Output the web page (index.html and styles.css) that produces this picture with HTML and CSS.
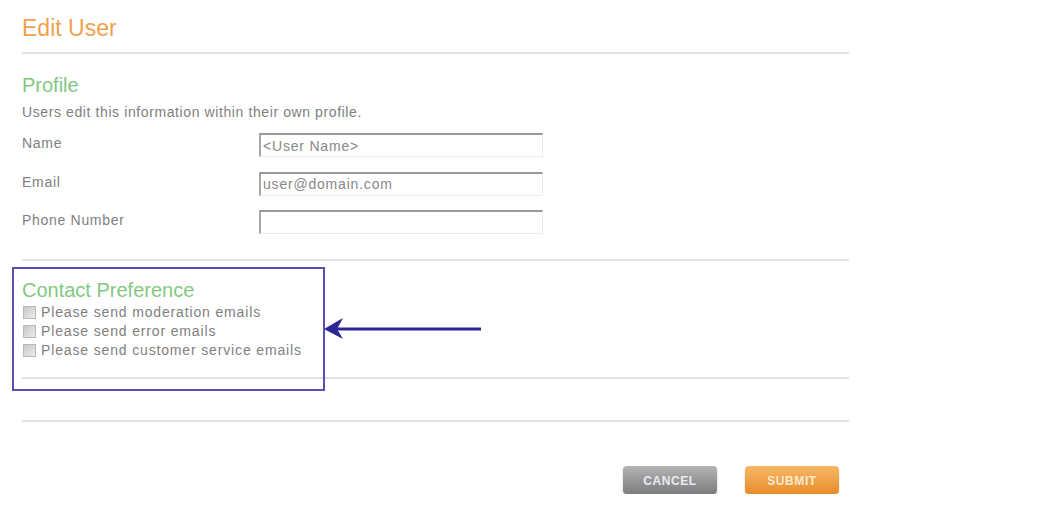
FILE: index.html
```html
<!DOCTYPE html>
<html lang="en">
<head>
  <meta charset="UTF-8" />
  <title>Edit User</title>
  <link rel="stylesheet" href="styles.css">
</head>
<body>
  <div class="page">
    <h1 class="title">Edit User</h1>
    <hr />

    <section class="profile">
      <h2>Profile</h2>
      <p class="hint">Users edit this information within their own profile.</p>
      <div class="fields">
        <div class="field">
          <label for="name">Name</label>
          <input type="text" id="name" value="&lt;User Name&gt;" />
        </div>
        <div class="field">
          <label for="email">Email</label>
          <input type="text" id="email" value="user@domain.com" />
        </div>
        <div class="field">
          <label for="phone">Phone Number</label>
          <input type="text" id="phone" value="" />
        </div>
      </div>
    </section>
    <hr class="after-profile" />

    <section class="contact">
      <h2>Contact Preference</h2>
      <label class="check"><input type="checkbox" /> Please send moderation emails</label>
      <label class="check"><input type="checkbox" /> Please send error emails</label>
      <label class="check"><input type="checkbox" /> Please send customer service emails</label>
    </section>
    <hr class="after-contact" />
    <hr class="last" />

    <div class="actions">
      <button class="btn cancel">Cancel</button>
      <button class="btn submit">Submit</button>
    </div>

    <!-- annotation drawn over the form -->
    <div class="callout"></div>
    <svg class="arrow" width="170" height="30" viewBox="0 0 170 30">
      <line x1="14" y1="15" x2="158" y2="15" stroke="#2b2595" stroke-width="3" />
      <path d="M1 15 L20 4 L14 15 L20 25 Z" fill="#2b2595" />
    </svg>
  </div>
</body>
</html>
```

FILE: styles.css
```css
body {
  margin: 0;
  background: #fff;
  font-family: "Liberation Sans", Arial, sans-serif;
  color: #808080;
}

.page {
  position: relative;
  width: 827px;
  margin-left: 22px;
  padding-top: 16px;
}

.title {
  margin: 0;
  font-size: 23px;
  line-height: 24px;
  font-weight: normal;
  color: #efa24c;
}

hr {
  height: 2px;
  margin: 12px 0 0;
  border: none;
  background: #e2e2e2;
}

h2 {
  margin: 0;
  font-size: 20px;
  line-height: 22px;
  font-weight: normal;
  color: #82c882;
}

.profile {
  margin-top: 20px;
}

.hint {
  margin: 8px 0 0;
  font-size: 14px;
  line-height: 17px;
  letter-spacing: 0.6px;
}

.fields {
  display: flex;
  flex-direction: column;
  gap: 14.5px;
  margin-top: 12px;
}

.field {
  display: flex;
  align-items: flex-start;
}

.field label {
  width: 237px;
  font-size: 14px;
  line-height: 20px;
  letter-spacing: 0.7px;
}

.field input {
  box-sizing: border-box;
  width: 284px;
  height: 24px;
  margin: 0;
  padding: 0 2px;
  border-top: 2px solid #9a9a9a;
  border-left: 2px solid #a8a8a8;
  border-right: 1px solid #ececec;
  border-bottom: 1px solid #ececec;
  font-family: "Liberation Sans", Arial, sans-serif;
  font-size: 14px;
  letter-spacing: 0.8px;
  color: #888;
  outline: none;
}

.after-profile {
  margin-top: 25px;
}

.contact {
  display: flex;
  flex-direction: column;
  margin-top: 18px;
}

.contact h2 {
  margin-bottom: 2px;
}

.check {
  display: flex;
  align-items: center;
  font-size: 14px;
  line-height: 19px;
  letter-spacing: 0.85px;
  color: #808080;
}

.check input {
  appearance: none;
  -webkit-appearance: none;
  box-sizing: border-box;
  width: 13px;
  height: 13px;
  margin: 0 5px 0 1px;
  border: 1px solid #b8b8b8;
  background: linear-gradient(135deg, #c8c8c8, #ececec);
}

.after-contact {
  margin-top: 17px;
}

.last {
  margin-top: 41px;
}

.actions {
  display: flex;
  justify-content: flex-end;
  gap: 28px;
  margin-top: 44px;
  padding-right: 10px;
}

.btn {
  width: 94px;
  height: 28px;
  padding-top: 2px;
  border: none;
  border-radius: 4px;
  font-family: "Liberation Sans", Arial, sans-serif;
  font-size: 12px;
  font-weight: bold;
  letter-spacing: 0.6px;
  text-transform: uppercase;
  cursor: pointer;
}

.cancel {
  background: linear-gradient(#b4b4b4, #7c7c7c);
  color: #e6ecf2;
  box-shadow: 0 1px 2px rgba(0,0,0,0.25);
}

.submit {
  background: linear-gradient(#f7b766, #e98d2c);
  color: #fde8d0;
  box-shadow: 0 1px 2px rgba(200,120,40,0.35);
}

.callout {
  position: absolute;
  left: -10px;
  top: 267px;
  width: 309px;
  height: 120px;
  border: 2px solid #5a4db4;
}

.arrow {
  position: absolute;
  left: 301px;
  top: 314px;
}
```
